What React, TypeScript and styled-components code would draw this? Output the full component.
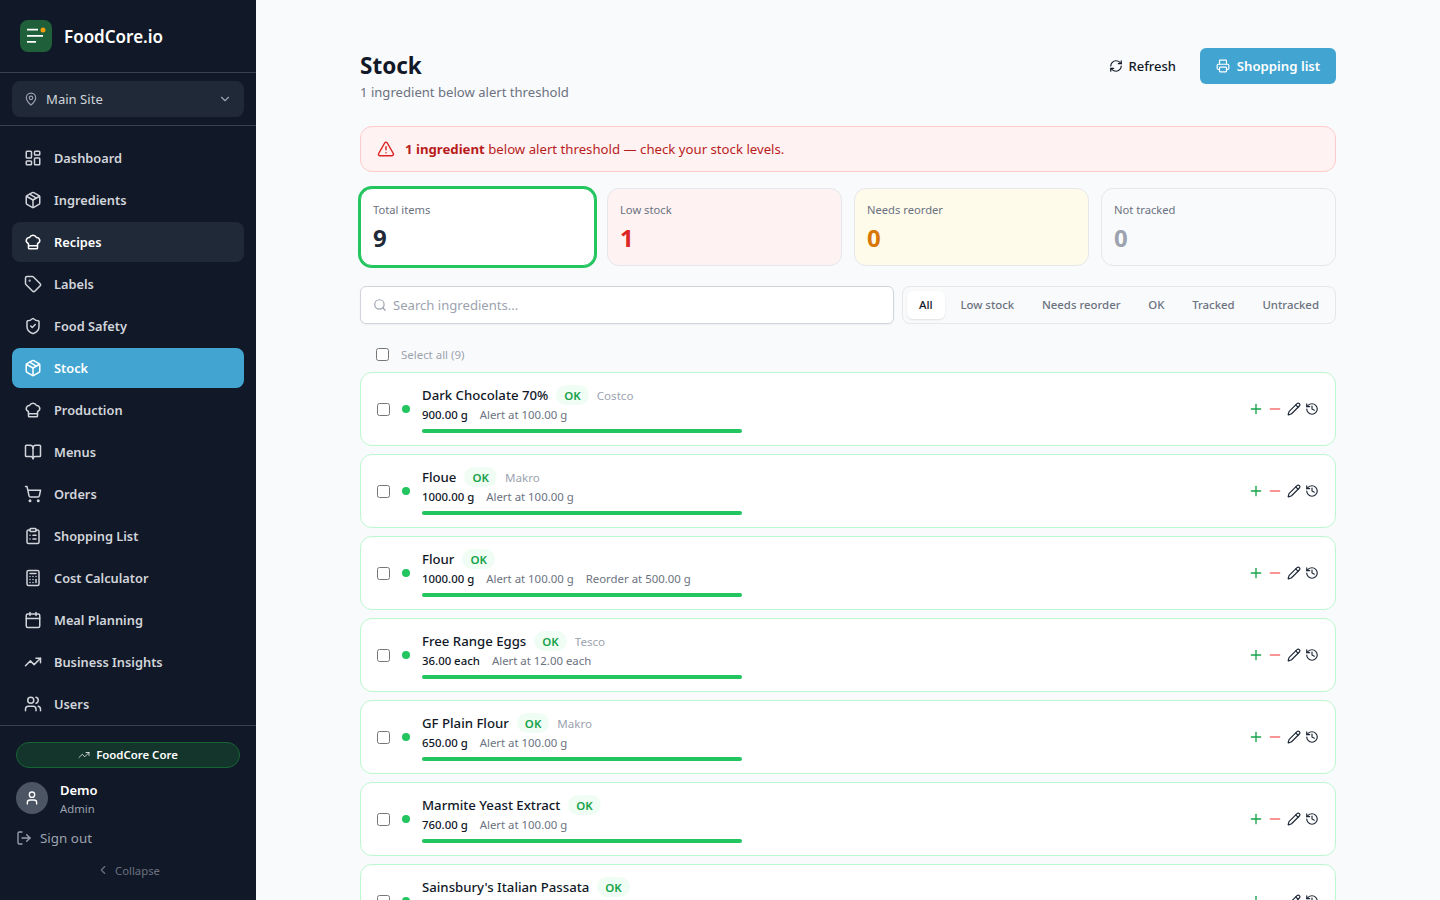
import React from 'react';
import styled, { createGlobalStyle } from 'styled-components';
import {
  LayoutDashboard, Package, ChefHat, Tag, ShieldCheck, BookOpen, ShoppingCart, ClipboardList,
  Calculator, Calendar, TrendingUp, Users, MapPin, ChevronDown, User, LogOut, ChevronLeft,
  RefreshCw, Printer, TriangleAlert, Search, Plus, Minus, Pencil, History,
} from 'lucide-react';

const Global = createGlobalStyle`
  html, body { margin: 0; padding: 0; height: 100%; overflow: hidden; }
  body { font-family: "Noto Sans", sans-serif; background: #f9fafb; color: #111827; }
  * { box-sizing: border-box; }
`;
const Shell = styled.div`display: flex; height: 900px; overflow: hidden;`;
const Side = styled.aside`width: 256px; flex: none; background: #111827; display: flex; flex-direction: column; height: 900px;`;
const Brand = styled.div`height: 73px; flex: none; border-bottom: 1px solid #374151; display: flex; align-items: center; gap: 12px; padding: 0 20px;`;
const LogoBox = styled.div`width: 32px; height: 32px; border-radius: 8px; background: #1f5f3a; display: flex; align-items: center; justify-content: center;`;
const BrandName = styled.span`font-size: 17px; font-weight: 600; color: #fff;`;
const SiteWrap = styled.div`height: 53px; flex: none; padding: 8px 12px; border-bottom: 1px solid #374151;`;
const SiteBtn = styled.div`height: 36px; border-radius: 8px; background: #1f2937; display: flex; align-items: center; padding: 0 12px; gap: 8px; color: #d1d5db; font-size: 13.1px; font-weight: 400;
  span { flex: 1; }`;
const Nav = styled.nav`flex: 1; padding: 12px 12px 0; display: flex; flex-direction: column; gap: 2px;`;
const NavItem = styled.div<{ $state?: 'active' | 'hover' }>`height: 40px; flex: none; border-radius: 8px; display: flex; align-items: center; gap: 12px; padding: 0 12px; font-size: 12.8px; font-weight: 600;
  color: ${p => (p.$state ? '#fff' : '#d1d5db')};
  background: ${p => (p.$state === 'active' ? '#42a5d1' : p.$state === 'hover' ? '#1f2937' : 'transparent')};`;
const Foot = styled.div`height: 175px; flex: none; border-top: 1px solid #374151; padding: 16px 16px 0; display: flex; flex-direction: column;`;
const Plan = styled.div`height: 26px; flex: none; border-radius: 999px; background: #14352c; border: 1px solid #166534; color: #fff; font-size: 11.4px; font-weight: 600; padding-bottom: 1px; display: flex; align-items: center; justify-content: center; gap: 6px;`;
const UserRow = styled.div`display: flex; gap: 12px; margin-top: 14px; align-items: center; height: 32px;`;
const Avatar = styled.div`width: 32px; height: 32px; border-radius: 50%; background: #4b5563; color: #fff; display: flex; align-items: center; justify-content: center;`;
const UserText = styled.div`padding-top: 2px;`;
const UserName = styled.div`font-size: 13px; font-weight: 600; color: #fff; line-height: 20px;`;
const UserRole = styled.div`font-size: 11.3px; color: #9ca3af; line-height: 18px;`;
const SignOut = styled.div`display: flex; align-items: center; gap: 8px; margin-top: 8px; height: 32px; color: #9ca3af; font-size: 13.4px;`;
const Collapse = styled.div`display: flex; align-items: center; justify-content: center; gap: 5px; height: 32px; color: #6b7280; font-size: 11.3px;`;
const Main = styled.main`flex: 1; overflow: hidden; height: 900px;`;
const Content = styled.div`width: 976px; margin: 0 auto; padding-top: 48px;`;
const Head = styled.header`display: flex; justify-content: space-between; align-items: flex-start; height: 78px;`;
const Title = styled.h1`margin: 0; font-size: 22.5px; font-weight: 700; line-height: 36px; color: #111827;`;
const Sub = styled.p`margin: 0; font-size: 13.1px; line-height: 16px; color: #6b7280;`;
const Actions = styled.div`display: flex; gap: 8px; align-items: center;`;
const RefreshBtn = styled.div`height: 36px; display: flex; align-items: center; gap: 6px; padding: 0 16px; font-size: 13px; font-weight: 500; color: #111827;
  span { padding-bottom: 1px; }`;
const ListBtn = styled.div`height: 36px; width: 136px; border-radius: 6px; background: #42a5d1; color: #fff; display: flex; align-items: center; justify-content: center; gap: 7px; font-size: 13.2px; font-weight: 600;
  span { padding-bottom: 1px; }`;
const Alert = styled.div`height: 46px; border: 1px solid #fecaca; background: #fef2f2; border-radius: 12px; display: flex; align-items: center; gap: 10px; padding: 0 16px; font-size: 13.2px; color: #b91c1c;
  b { font-weight: 700; }`;
const Stats = styled.div`display: grid; grid-template-columns: repeat(4, 1fr); gap: 12px; margin-top: 16px;`;
const Stat = styled.div<{ $bg: string; $sel?: boolean }>`height: 78px; border-radius: 12px; padding: 13px 12px; background: ${p => p.$bg};
  border: 1px solid #e5e7eb;
  ${p => p.$sel && 'box-shadow: 0 0 0 2px #22c55e; border-color: #22c55e;'}`;
const StatLabel = styled.div`font-size: 11.2px; line-height: 16px; color: #6b7280;`;
const StatValue = styled.div<{ $c: string }>`font-size: 24px; font-weight: 700; line-height: 32px; margin-top: 4px; color: ${p => p.$c};`;
const Filters = styled.div`display: flex; gap: 8px; margin-top: 20px; height: 38px;`;
const SearchBox = styled.div`flex: 1; background: #fff; border: 1px solid #d1d5db; border-radius: 6px; display: flex; align-items: center; gap: 6px; padding: 0 12px; color: #9ca3af; font-size: 13.1px; box-shadow: 0 1px 2px rgba(0,0,0,.05);
  span { padding-bottom: 1px; }`;
const Tabs = styled.div`width: 434px; flex: none; border: 1px solid #e5e7eb; border-radius: 8px; display: flex; align-items: center; padding: 0 4px; justify-content: space-between;`;
const Tab = styled.div<{ $on?: boolean }>`height: 28px; padding: 0 12px 1px; border-radius: 6px; display: flex; align-items: center; font-size: 11.4px; font-weight: 500; color: ${p => (p.$on ? '#111827' : '#6b7280')}; background: ${p => (p.$on ? '#fff' : 'transparent')}; ${p => p.$on && 'box-shadow: 0 1px 2px rgba(0,0,0,.1);'}`;
const SelectRow = styled.label`display: flex; align-items: center; gap: 12px; height: 48px; padding: 12px 0 0 16px; font-size: 11.45px; color: #9ca3af;`;
const Check = styled.input.attrs({ type: 'checkbox' })`width: 13px; height: 13px; margin: 0; flex: none; accent-color: #6b7280;`;
const List = styled.div`display: flex; flex-direction: column; gap: 8px;`;
const Row = styled.div`height: 74px; flex: none; background: #fff; border: 1px solid #bbf7d0; border-radius: 12px; display: flex; align-items: center; padding: 0 16px;`;
const Dot = styled.span`width: 8px; height: 8px; border-radius: 50%; background: #22c55e; margin-left: 12px; flex: none;`;
const Info = styled.div`margin-left: 12px; flex: 1;`;
const NameLine = styled.div`display: flex; align-items: center; gap: 8px; height: 22px;`;
const Name = styled.span`font-size: 13.2px; font-weight: 500; color: #111827;`;
const Badge = styled.span`height: 20px; padding: 0 8px; border-radius: 999px; background: #f0fdf4; color: #16a34a; font-size: 11.5px; font-weight: 600; display: flex; align-items: center;`;
const Supplier = styled.span`font-size: 11.6px; color: #9ca3af;`;
const Meta = styled.div`display: flex; gap: 12px; font-size: 11.4px; line-height: 18px; color: #6b7280;
  strong { font-weight: 500; color: #111827; }`;
const Bar = styled.div`width: 320px; height: 4px; border-radius: 2px; background: #22c55e; margin: 5px 0 1px;`;
const RowActions = styled.div`display: flex; align-items: center; gap: 4px; color: #1f2937;
  svg:first-child { margin-right: -1px; }`;

const nav: [any, string, ('active' | 'hover')?][] = [
  [LayoutDashboard, 'Dashboard'], [Package, 'Ingredients'], [ChefHat, 'Recipes', 'hover'], [Tag, 'Labels'],
  [ShieldCheck, 'Food Safety'], [Package, 'Stock', 'active'], [ChefHat, 'Production'], [BookOpen, 'Menus'],
  [ShoppingCart, 'Orders'], [ClipboardList, 'Shopping List'], [Calculator, 'Cost Calculator'],
  [Calendar, 'Meal Planning'], [TrendingUp, 'Business Insights'], [Users, 'Users'],
];
const stats = [
  { l: 'Total items', v: '9', c: '#1f2937', bg: '#fff', sel: true },
  { l: 'Low stock', v: '1', c: '#dc2626', bg: '#fef2f2' },
  { l: 'Needs reorder', v: '0', c: '#d97706', bg: '#fffbeb' },
  { l: 'Not tracked', v: '0', c: '#9ca3af', bg: '#f9fafb' },
];
const tabs = ['All', 'Low stock', 'Needs reorder', 'OK', 'Tracked', 'Untracked'];
const rows = [
  { n: 'Dark Chocolate 70%', s: 'Costco', q: '900.00 g', a: 'Alert at 100.00 g' },
  { n: 'Floue', s: 'Makro', q: '1000.00 g', a: 'Alert at 100.00 g' },
  { n: 'Flour', q: '1000.00 g', a: 'Alert at 100.00 g', r: 'Reorder at 500.00 g' },
  { n: 'Free Range Eggs', s: 'Tesco', q: '36.00 each', a: 'Alert at 12.00 each' },
  { n: 'GF Plain Flour', s: 'Makro', q: '650.00 g', a: 'Alert at 100.00 g' },
  { n: 'Marmite Yeast Extract', q: '760.00 g', a: 'Alert at 100.00 g' },
  { n: "Sainsbury's Italian Passata", q: '400.00 g', a: 'Alert at 100.00 g' },
];

export default function App() {
  return (
    <Shell>
      <Global />
      <Side>
        <Brand>
          <LogoBox>
            <svg width="20" height="20" viewBox="0 0 20 20" aria-hidden="true">
              <path d="M1 3.7h11M1 9.8h16M1 15.8h9" stroke="#fff" strokeWidth="1.8" fill="none" />
              <circle cx="17" cy="4" r="2.5" fill="#f59e0b" />
            </svg>
          </LogoBox>
          <BrandName>FoodCore.io</BrandName>
        </Brand>
        <SiteWrap>
          <SiteBtn>
            <MapPin size={14} color="#9ca3af" />
            <span>Main Site</span>
            <ChevronDown size={14} color="#9ca3af" />
          </SiteBtn>
        </SiteWrap>
        <Nav>
          {nav.map(([I, t, st]) => (
            <NavItem key={t} $state={st}><I size={18} /><span>{t}</span></NavItem>
          ))}
        </Nav>
        <Foot>
          <Plan><TrendingUp size={12} strokeWidth={1.5} />FoodCore Core</Plan>
          <UserRow>
            <Avatar><User size={16} /></Avatar>
            <UserText><UserName>Demo</UserName><UserRole>Admin</UserRole></UserText>
          </UserRow>
          <SignOut><LogOut size={16} /><span>Sign out</span></SignOut>
          <Collapse><ChevronLeft size={14} />Collapse</Collapse>
        </Foot>
      </Side>
      <Main>
        <Content>
          <Head>
            <div>
              <Title>Stock</Title>
              <Sub>1 ingredient below alert threshold</Sub>
            </div>
            <Actions>
              <RefreshBtn><RefreshCw size={14} /><span>Refresh</span></RefreshBtn>
              <ListBtn><Printer size={14} /><span>Shopping list</span></ListBtn>
            </Actions>
          </Head>
          <Alert>
            <TriangleAlert size={18} color="#dc2626" />
            <span><b>1 ingredient</b> below alert threshold — check your stock levels.</span>
          </Alert>
          <Stats>
            {stats.map(s => (
              <Stat key={s.l} $bg={s.bg} $sel={s.sel}>
                <StatLabel>{s.l}</StatLabel>
                <StatValue $c={s.c}>{s.v}</StatValue>
              </Stat>
            ))}
          </Stats>
          <Filters>
            <SearchBox><Search size={14} /><span>Search ingredients...</span></SearchBox>
            <Tabs>{tabs.map((t, i) => <Tab key={t} $on={i === 0}>{t}</Tab>)}</Tabs>
          </Filters>
          <SelectRow><Check />Select all (9)</SelectRow>
          <List>
            {rows.map(r => (
              <Row key={r.n}>
                <Check />
                <Dot />
                <Info>
                  <NameLine>
                    <Name>{r.n}</Name>
                    <Badge>OK</Badge>
                    {r.s && <Supplier>{r.s}</Supplier>}
                  </NameLine>
                  <Meta>
                    <strong>{r.q}</strong>
                    <span>{r.a}</span>
                    {r.r && <span>{r.r}</span>}
                  </Meta>
                  <Bar />
                </Info>
                <RowActions>
                  <Plus size={16} color="#16a34a" />
                  <Minus size={16} color="#f87171" />
                  <Pencil size={14} />
                  <History size={14} />
                </RowActions>
              </Row>
            ))}
          </List>
        </Content>
      </Main>
    </Shell>
  );
}
